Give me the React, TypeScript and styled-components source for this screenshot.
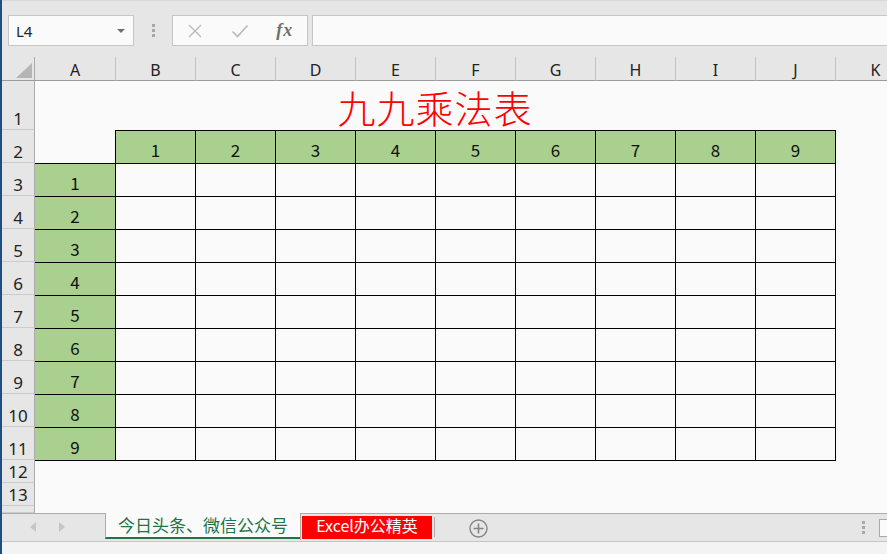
import styled, { createGlobalStyle } from "styled-components";

const GlobalStyle = createGlobalStyle`
  html, body {
    margin: 0;
    padding: 0;
    overflow: hidden;
    background: #fafafa;
  }
  body {
    font-family: "Noto Sans", "Noto Sans CJK SC", sans-serif;
  }
`;

const COLUMNS = ["A", "B", "C", "D", "E", "F", "G", "H", "I", "J", "K"];
const NUMBERS = [1, 2, 3, 4, 5, 6, 7, 8, 9];

const App = () => {
  return (
    <Window>
      <GlobalStyle />
      <FormulaBar>
        <NameBox>
          L4
          <NameCaret />
        </NameBox>
        <Grip>
          <i />
          <i />
          <i />
        </Grip>
        <ActionBox>
          <ActionSlot>
            <svg width="16" height="16" viewBox="0 0 16 16">
              <path d="M2 2 L14 14 M14 2 L2 14" stroke="#b9b9b9" strokeWidth="1.3" fill="none" />
            </svg>
          </ActionSlot>
          <ActionSlot>
            <svg width="18" height="16" viewBox="0 0 18 16">
              <path d="M1.5 8.5 L6.5 13.5 L16.5 2.5" stroke="#b9b9b9" strokeWidth="1.6" fill="none" />
            </svg>
          </ActionSlot>
          <ActionSlot>
            <Fx>fx</Fx>
          </ActionSlot>
        </ActionBox>
        <FormulaInput />
      </FormulaBar>

      <Sheet>
        <Corner>
          <svg width="16" height="15" viewBox="0 0 16 15">
            <polygon points="16,0 16,15 0,15" fill="#b5b5b5" />
          </svg>
        </Corner>
        {COLUMNS.map((c, i) => (
          <ColHeader key={c} $first={i === 0}>
            {c}
          </ColHeader>
        ))}

        <RowHeader>1</RowHeader>
        <Title>九九乘法表</Title>
        <Blank />

        <RowHeader>2</RowHeader>
        <Blank />
        {NUMBERS.map((n) => (
          <Cell key={n} $fill>
            {n}
          </Cell>
        ))}
        <Blank />

        {NUMBERS.map((r) => (
          <Row key={r} n={r} />
        ))}

        <RowHeader>12</RowHeader>
        <Blank $span={11} />
        <RowHeader>13</RowHeader>
        <Blank $span={11} />
        <RowHeader />
        <Blank $span={11} />
      </Sheet>

      <TabBar>
        <NavArea>
          <NavArrow $dir="left" />
          <NavArrow $dir="right" />
        </NavArea>
        <ActiveTab>今日头条、微信公众号</ActiveTab>
        <TabRest>
          <TabSlot>
            <ColoredTab>Excel办公精英</ColoredTab>
          </TabSlot>
          <TabDivider />
          <AddSheet>
            <svg width="19" height="19" viewBox="0 0 19 19">
              <circle cx="9.5" cy="9.5" r="8.5" stroke="#858585" strokeWidth="1.4" fill="none" />
              <path d="M9.5 4.5 V14.5 M4.5 9.5 H14.5" stroke="#858585" strokeWidth="1.6" />
            </svg>
          </AddSheet>
          <Spacer />
          <Grip $small>
            <i />
            <i />
            <i />
          </Grip>
          <ScrollStart />
        </TabRest>
      </TabBar>
      <StatusBar />
    </Window>
  );
};

const Row = ({ n }: { n: number }) => {
  return (
    <>
      <RowHeader>{n + 2}</RowHeader>
      <Cell $fill $noLeft>
        {n}
      </Cell>
      {NUMBERS.map((c) => (
        <Cell key={c} />
      ))}
      <Blank />
    </>
  );
};

const Window = styled.div`
  width: 887px;
  height: 554px;
  display: flex;
  flex-direction: column;
  border-left: 2px solid #1f4e80;
  box-sizing: border-box;
  overflow: hidden;
  background: #fafafa;
`;

const FormulaBar = styled.div`
  height: 57px;
  flex-shrink: 0;
  display: flex;
  align-items: flex-start;
  padding: 14px 0 0 6px;
  box-sizing: border-box;
  background: #e6e6e6;
  border-top: 1px solid #d8d8d8;
`;

const NameBox = styled.div`
  width: 126px;
  height: 31px;
  box-sizing: border-box;
  display: flex;
  align-items: center;
  justify-content: space-between;
  padding: 0 8px 0 7px;
  background: #fafafa;
  border: 1px solid #c6c6c6;
  color: #262626;
  font-size: 15px;
`;

const NameCaret = styled.span`
  width: 0;
  height: 0;
  border-left: 4px solid transparent;
  border-right: 4px solid transparent;
  border-top: 4px solid #6f6f6f;
`;

const Grip = styled.div<{ $small?: boolean }>`
  display: flex;
  flex-direction: column;
  gap: 2px;
  flex-shrink: 0;
  margin: ${({ $small }) => ($small ? "7px 0 0 0" : "9px 0 0 18px")};

  i {
    display: block;
    width: 3px;
    height: 3px;
    background: #a8a8a8;
  }
`;

const ActionBox = styled.div`
  width: 136px;
  height: 31px;
  margin-left: 17px;
  box-sizing: border-box;
  display: flex;
  background: #fafafa;
  border: 1px solid #c6c6c6;
`;

const ActionSlot = styled.div`
  width: 45px;
  display: flex;
  align-items: center;
  justify-content: center;
`;

const Fx = styled.span`
  font-family: "Liberation Serif", "DejaVu Serif", serif;
  font-style: italic;
  font-weight: 700;
  font-size: 18px;
  color: #6e6e6e;
  letter-spacing: 1px;
`;

const FormulaInput = styled.div`
  flex: 1;
  height: 31px;
  margin-left: 4px;
  box-sizing: border-box;
  background: #fafafa;
  border: 1px solid #c6c6c6;
  border-right: none;
`;

const Sheet = styled.div`
  height: 456px;
  flex-shrink: 0;
  display: grid;
  grid-template-columns: 33px repeat(10, 80px) 80px;
  grid-template-rows: 24px 49px repeat(10, 33px) 23px 23px 7px;
  overflow: hidden;
  background: #fafafa;
`;

const Corner = styled.div`
  background: #e6e6e6;
  border-right: 1px solid #ababab;
  border-bottom: 1px solid #9b9b9b;
  display: flex;
  align-items: flex-end;
  justify-content: flex-end;
  padding: 0 2px 2px 0;
`;

const ColHeader = styled.div<{ $first?: boolean }>`
  background: #e6e6e6;
  border-bottom: 1px solid #9b9b9b;
  border-left: ${({ $first }) => ($first ? "none" : "1px solid #c2c2c2")};
  display: flex;
  align-items: center;
  justify-content: center;
  padding-top: 3px;
  color: #222;
  font-size: 16px;
`;

const RowHeader = styled.div`
  background: #e6e6e6;
  border-right: 1px solid #ababab;
  border-bottom: 1px solid #cbcbcb;
  display: flex;
  align-items: flex-end;
  justify-content: center;
  color: #222;
  font-size: 17px;
  line-height: 20px;
  overflow: hidden;
`;

const Title = styled.div`
  grid-column: 2 / span 10;
  display: flex;
  align-items: center;
  justify-content: center;
  padding-top: 2px;
  color: #ff0000;
  font-family: "Noto Sans CJK SC", sans-serif;
  font-weight: 300;
  font-size: 38px;
  letter-spacing: 1px;
`;

const Blank = styled.div<{ $span?: number }>`
  grid-column: span ${({ $span }) => $span ?? 1};
`;

const Cell = styled.div<{ $fill?: boolean; $noLeft?: boolean }>`
  margin: 0 -1px -1px 0;
  border: 1px solid #000;
  border-left: ${({ $noLeft }) => ($noLeft ? "none" : "1px solid #000")};
  background: ${({ $fill }) => ($fill ? "#a9d08e" : "transparent")};
  display: flex;
  align-items: center;
  justify-content: center;
  padding-top: 4px;
  color: #111;
  font-family: "Noto Sans CJK SC", sans-serif;
  font-weight: 400;
  font-size: 17px;
`;

const TabBar = styled.div`
  height: 28px;
  flex-shrink: 0;
  display: flex;
  background: #e6e6e6;
`;

const NavArea = styled.div`
  width: 103px;
  border-top: 1px solid #ababab;
  display: flex;
  align-items: center;
  gap: 23px;
  padding: 0 0 2px 28px;
  box-sizing: border-box;
`;

const NavArrow = styled.span<{ $dir: "left" | "right" }>`
  width: 0;
  height: 0;
  border-top: 5px solid transparent;
  border-bottom: 5px solid transparent;
  ${({ $dir }) =>
    $dir === "left" ? "border-right: 6px solid #c6c6c6;" : "border-left: 6px solid #c6c6c6;"}
`;

const ActiveTab = styled.div`
  width: 195px;
  height: 26px;
  box-sizing: border-box;
  background: #fafafa;
  border-left: 1px solid #ababab;
  border-bottom: 2px solid #217346;
  display: flex;
  justify-content: center;
  padding-top: 2px;
  color: #217346;
  font-family: "Noto Sans CJK SC", sans-serif;
  font-size: 17px;
  line-height: 20px;
`;

const TabRest = styled.div`
  flex: 1;
  border-top: 1px solid #ababab;
  display: flex;
  align-items: flex-start;
`;

const TabSlot = styled.div`
  height: 26px;
  box-sizing: border-box;
  border-left: 1px solid #ababab;
  padding: 2px 0 0 1px;
`;

const ColoredTab = styled.div`
  width: 130px;
  height: 23px;
  background: #ff0000;
  color: #fff;
  display: flex;
  justify-content: center;
  font-family: "Noto Sans CJK SC", sans-serif;
  font-size: 16px;
  line-height: 18px;
`;

const TabDivider = styled.div`
  width: 1px;
  height: 20px;
  margin: 3px 0 0 2px;
  background: #ababab;
`;

const AddSheet = styled.div`
  margin: 5px 0 0 34px;
  display: flex;
`;

const Spacer = styled.div`
  flex: 1;
`;

const ScrollStart = styled.div`
  width: 8px;
  height: 18px;
  margin: 5px 0 0 14px;
  flex-shrink: 0;
  box-sizing: border-box;
  background: #fafafa;
  border: 1px solid #a9a9a9;
  border-right: none;
`;

const StatusBar = styled.div`
  height: 13px;
  flex-shrink: 0;
  box-sizing: border-box;
  background: #f3f3f3;
  border-top: 1px solid #c6c6c6;
`;

export default App;
